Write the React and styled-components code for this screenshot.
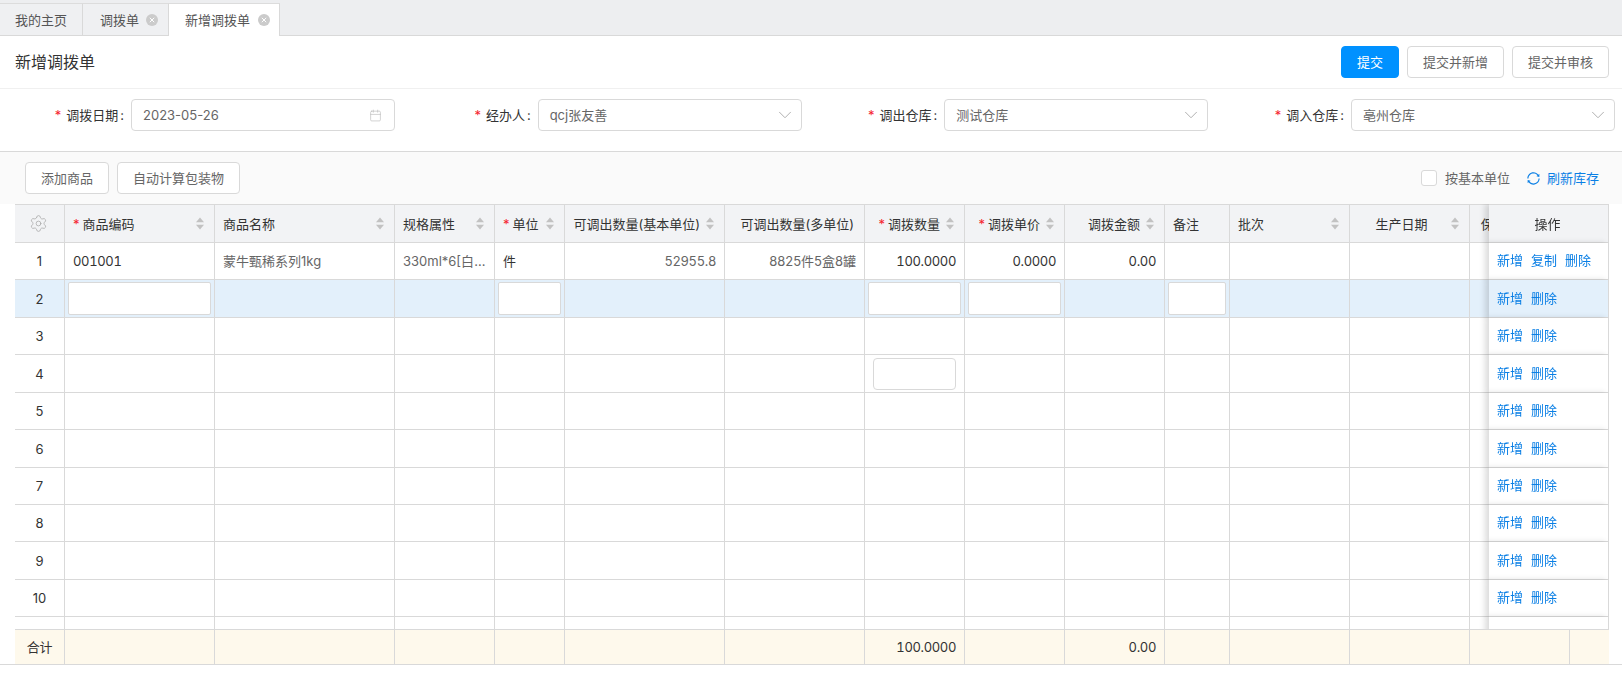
import React from 'react';
import styled, { createGlobalStyle } from 'styled-components';
import { Settings, Calendar, ChevronDown } from 'lucide-react';
import { AiOutlineSync } from 'react-icons/ai';

const GlobalStyle = createGlobalStyle`
  html, body {
    margin: 0;
    padding: 0;
    background: #fff;
    color: #333;
    font-family: Inter, "Noto Sans CJK SC", sans-serif;
    font-size: 13px;
    line-height: 18px;
  }
  * { box-sizing: border-box; }
`;

const Page = styled.div`
  width: 1622px;
  height: 679px;
  overflow: hidden;
  background: #fff;
`;

const TabBar = styled.div`
  display: flex;
  align-items: flex-end;
  height: 36px;
  padding-top: 3px;
  background: #edeef0;
  border-bottom: 1px solid #d9d9d9;
`;

const Tab = styled.div`
  display: flex;
  align-items: center;
  gap: ${(p) => (p.$active ? '8px' : '7px')};
  height: ${(p) => (p.$active ? '33px' : '32px')};
  margin-bottom: ${(p) => (p.$active ? '-1px' : '0')};
  padding: ${(p) => {
    if (p.$first) return '0 15px';
    return p.$active ? '0 9px 0 16px' : '0 10px 0 17px';
  }};
  color: #555;
  background: ${(p) => (p.$active ? '#fff' : '#eff0f2')};
  border-top: 1px solid #dcdcdc;
  border-right: 1px solid #d9d9d9;
`;

const CloseDot = styled.svg`
  width: 12px;
  height: 12px;
  flex: none;
`;

const CloseIcon = () => (
  <CloseDot viewBox="0 0 12 12">
    <circle cx="6" cy="6" r="6" fill="#cbcbcb" />
    <path d="M3.8 3.8l4.4 4.4M8.2 3.8l-4.4 4.4" stroke="#fff" strokeWidth="1" fill="none" />
  </CloseDot>
);

const TitleBar = styled.div`
  display: flex;
  align-items: center;
  justify-content: space-between;
  height: 53px;
  padding: 0 13px 0 15px;
  border-bottom: 1px solid #f0f0f0;
`;

const Title = styled.h1`
  margin: 0;
  font-size: 16px;
  line-height: 22px;
  font-weight: 400;
  color: #333;
`;

const Actions = styled.div`
  display: flex;
  gap: 8px;
`;

const Button = styled.button`
  height: 32px;
  padding: 0 15px;
  font: inherit;
  color: ${(p) => (p.$primary ? '#fff' : '#666')};
  background: ${(p) => (p.$primary ? '#0091ff' : '#fff')};
  border: 1px solid ${(p) => (p.$primary ? '#0091ff' : '#d9d9d9')};
  border-radius: 4px;
`;

const Form = styled.div`
  display: grid;
  grid-template-columns: 395px repeat(3, 1fr);
  height: 62px;
  padding: 10px 7px 0 0;
`;

const Field = styled.div`
  display: flex;
  align-items: center;
  justify-content: flex-end;
  height: 32px;
`;

const Label = styled.label`
  margin-right: 7px;
  color: #333;
`;

const Colon = styled.span`
  margin-left: 2px;
`;

const Star = styled.span`
  margin-right: 3px;
  color: #f5222d;
`;

const LabelStar = styled(Star)`
  margin-right: 5px;
`;

const SelectBox = styled.div`
  display: flex;
  align-items: center;
  justify-content: space-between;
  width: 264px;
  height: 32px;
  padding: 0 ${(p) => (p.$date ? '12px' : '5px')} 0 11px;
  color: #666;
  background: #fff;
  border: 1px solid #d9d9d9;
  border-radius: 4px;
`;

const Toolbar = styled.div`
  display: flex;
  align-items: center;
  justify-content: space-between;
  height: 53px;
  padding: 0 23px 0 25px;
  background: #fafafa;
  border-top: 1px solid #d9d9d9;
`;

const ToolGroup = styled.div`
  display: flex;
  align-items: center;
  gap: 8px;
`;

const CheckBox = styled.span`
  width: 16px;
  height: 16px;
  background: #fff;
  border: 1px solid #d9d9d9;
  border-radius: 3px;
`;

const CheckLabel = styled.span`
  margin-right: 8px;
  color: #666;
`;

const RefreshLink = styled.a`
  display: flex;
  align-items: center;
  gap: 6px;
  color: #0a7fe5;
`;

const TableWrap = styled.div`
  width: 1594px;
  height: 425px;
  margin-left: 15px;
  overflow: hidden;
`;

const Table = styled.table`
  width: ${(p) => p.$width}px;
  table-layout: fixed;
  border-collapse: separate;
  border-spacing: 0;
`;

const Th = styled.th`
  height: 39px;
  padding: 0 10px 0 8px;
  font-weight: 400;
  color: #333;
  background: #f2f3f5;
  border-top: 1px solid #d9d9d9;
  border-right: 1px solid #d9d9d9;
  border-bottom: 1px solid #d9d9d9;
  white-space: nowrap;
  overflow: hidden;
`;

const HeadInner = styled.div`
  display: flex;
  align-items: center;
  justify-content: ${(p) => {
    if (p.$align === 'right') return 'flex-end';
    return p.$align === 'center' ? 'center' : 'space-between';
  }};
  gap: 6px;
`;

const HeadText = styled.span`
  flex: ${(p) => (p.$align === 'center' ? 1 : 'none')};
  text-align: ${(p) => (p.$align === 'center' ? 'center' : 'left')};
`;

const cellPadding = (p) => {
  if (p.$tight) return '0 3px';
  return p.$snug ? '0 4px 0 8px' : '0 8px';
};

const Td = styled.td`
  height: ${(p) => p.$height}px;
  padding: ${cellPadding};
  color: ${(p) => (p.$muted ? '#666' : '#333')};
  text-align: ${(p) => p.$align || 'left'};
  font-variant-numeric: ${(p) => (p.$tabular ? 'tabular-nums' : 'normal')};
  letter-spacing: ${(p) => (p.$tabular ? '-0.35px' : 'normal')};
  background: ${(p) => (p.$active ? '#e3f0fb' : '#fff')};
  border-right: 1px solid #d9d9d9;
  border-bottom: 1px solid #d9d9d9;
  white-space: nowrap;
  overflow: hidden;
  text-overflow: ellipsis;
`;

const OpHead = styled(Th)`
  position: sticky;
  right: 0;
  z-index: 2;
  text-align: center;
  box-shadow: -4px 0 6px rgba(0, 0, 0, 0.14);
`;

const OpCell = styled(Td)`
  position: sticky;
  right: 0;
  z-index: 2;
  padding: 0 8px;
  overflow: visible;
  box-shadow: -4px 0 6px rgba(0, 0, 0, 0.14);
`;

const OpLinks = styled.div`
  display: flex;
  gap: 8px;
  padding-bottom: 2px;
`;

const OpLink = styled.a`
  color: #0a7fe5;
`;

const CellInput = styled.input`
  display: block;
  width: 100%;
  height: ${(p) => (p.$soft ? '32px' : '33px')};
  padding: 0 6px;
  font: inherit;
  background: #fff;
  border: 1px solid #d9d9d9;
  border-radius: ${(p) => (p.$soft ? '4px' : '2px')};
  outline: none;
`;

const FooterWrap = styled.div`
  height: 36px;
  padding-left: 15px;
  border-bottom: 1px solid #d9d9d9;
`;

const FootCell = styled.td`
  height: 35px;
  padding: 0 8px;
  color: #333;
  text-align: ${(p) => p.$align || 'left'};
  font-variant-numeric: tabular-nums;
  letter-spacing: -0.35px;
  background: #fef9ec;
  border-top: 1px solid #d9d9d9;
  border-right: ${(p) => (p.$last ? 'none' : '1px solid #d9d9d9')};
`;

const SortSvg = styled.svg`
  flex: none;
  width: 8px;
  height: 13px;
`;

const SortIcon = () => (
  <SortSvg viewBox="0 0 8 13">
    <path d="M4 0.5L8 5.2H0z" fill="#c2c2c2" />
    <path d="M4 12.5L8 7.8H0z" fill="#c2c2c2" />
  </SortSvg>
);

const columns = [
  { key: 'no', title: '', width: 50, align: 'center' },
  { key: 'code', title: '商品编码', width: 150, required: true, sort: true, tabular: true },
  { key: 'name', title: '商品名称', width: 180, sort: true, muted: true },
  { key: 'spec', title: '规格属性', width: 100, sort: true, muted: true, snug: true },
  { key: 'unit', title: '单位', width: 70, required: true, sort: true },
  { key: 'avail', title: '可调出数量(基本单位)', width: 160, sort: true, align: 'right', muted: true, tabular: true },
  { key: 'multi', title: '可调出数量(多单位)', width: 140, align: 'right', muted: true },
  { key: 'qty', title: '调拨数量', width: 100, required: true, sort: true, align: 'right', tabular: true },
  { key: 'price', title: '调拨单价', width: 100, required: true, sort: true, align: 'right', tabular: true },
  { key: 'amount', title: '调拨金额', width: 100, sort: true, align: 'right', tabular: true },
  { key: 'remark', title: '备注', width: 65 },
  { key: 'batch', title: '批次', width: 120, sort: true },
  { key: 'made', title: '生产日期', width: 120, sort: true, headAlign: 'center' },
  { key: 'shelf', title: '保质期(天)', width: 100, sort: true, headAlign: 'center' },
];

const firstRow = {
  code: '001001',
  name: '蒙牛甄稀系列1kg',
  spec: '330ml*6[白桃味]',
  unit: '件',
  avail: '52955.8',
  multi: '8825件5盒8罐',
  qty: '100.0000',
  price: '0.0000',
  amount: '0.00',
};

// line positions in the table are not even, so each row keeps its own height
const rowHeights = [37, 38, 37, 38, 37, 38, 37, 37, 38, 37, 37];
const editing = ['code', 'unit', 'qty', 'price', 'remark'];

const footerWidths = [...columns.map((c) => c.width), 39];

const renderCell = (col, index) => {
  if (col.key === 'no') return index < 10 ? index + 1 : '';
  if (index === 0) return firstRow[col.key] || '';
  if (index === 1 && editing.includes(col.key)) return <CellInput />;
  if (index === 3 && col.key === 'qty') return <CellInput $soft />;
  return '';
};

const App = () => (
  <Page>
    <GlobalStyle />
    <TabBar>
      <Tab $first>我的主页</Tab>
      <Tab>
        调拨单
        <CloseIcon />
      </Tab>
      <Tab $active>
        新增调拨单
        <CloseIcon />
      </Tab>
    </TabBar>

    <TitleBar>
      <Title>新增调拨单</Title>
      <Actions>
        <Button $primary>提交</Button>
        <Button>提交并新增</Button>
        <Button>提交并审核</Button>
      </Actions>
    </TitleBar>

    <Form>
      <Field>
        <Label><LabelStar>*</LabelStar>调拨日期<Colon>:</Colon></Label>
        <SelectBox $date>
          2023-05-26
          <Calendar size={13} strokeWidth={1.2} color="#bbb" />
        </SelectBox>
      </Field>
      <Field>
        <Label><LabelStar>*</LabelStar>经办人<Colon>:</Colon></Label>
        <SelectBox>
          qcj张友善
          <ChevronDown size={22} strokeWidth={1} color="#aaa" />
        </SelectBox>
      </Field>
      <Field>
        <Label><LabelStar>*</LabelStar>调出仓库<Colon>:</Colon></Label>
        <SelectBox>
          测试仓库
          <ChevronDown size={22} strokeWidth={1} color="#aaa" />
        </SelectBox>
      </Field>
      <Field>
        <Label><LabelStar>*</LabelStar>调入仓库<Colon>:</Colon></Label>
        <SelectBox>
          亳州仓库
          <ChevronDown size={22} strokeWidth={1} color="#aaa" />
        </SelectBox>
      </Field>
    </Form>

    <Toolbar>
      <ToolGroup>
        <Button>添加商品</Button>
        <Button>自动计算包装物</Button>
      </ToolGroup>
      <ToolGroup>
        <CheckBox />
        <CheckLabel>按基本单位</CheckLabel>
        <RefreshLink>
          <AiOutlineSync size={15} />
          刷新库存
        </RefreshLink>
      </ToolGroup>
    </Toolbar>

    <TableWrap>
      <Table $width={1675}>
        <colgroup>
          {columns.map((col) => <col key={col.key} width={col.width} />)}
          <col width={120} />
        </colgroup>
        <thead>
          <tr>
            {columns.map((col) => (
              <Th key={col.key}>
                {col.key === 'no' ? (
                  <HeadInner $align="center">
                    <Settings size={19} strokeWidth={1} color="#aaa" />
                  </HeadInner>
                ) : (
                  <HeadInner $align={col.align}>
                    <HeadText $align={col.headAlign}>
                      {col.required && <Star>*</Star>}
                      {col.title}
                    </HeadText>
                    {col.sort && <SortIcon />}
                  </HeadInner>
                )}
              </Th>
            ))}
            <OpHead>操作</OpHead>
          </tr>
        </thead>
        <tbody>
          {rowHeights.map((height, index) => (
            <tr key={index}>
              {columns.map((col) => (
                <Td
                  key={col.key}
                  $height={height}
                  $active={index === 1}
                  $align={col.align}
                  $muted={col.muted}
                  $snug={col.snug}
                  $tabular={col.tabular}
                  $tight={index === 1 && editing.includes(col.key)}
                >
                  {renderCell(col, index)}
                </Td>
              ))}
              <OpCell $height={height} $active={index === 1}>
                {index < 10 && (
                  <OpLinks>
                    <OpLink>新增</OpLink>
                    {index === 0 && <OpLink>复制</OpLink>}
                    <OpLink>删除</OpLink>
                  </OpLinks>
                )}
              </OpCell>
            </tr>
          ))}
        </tbody>
      </Table>
    </TableWrap>

    <FooterWrap>
      <Table $width={1594}>
        <colgroup>
          {footerWidths.map((w, i) => <col key={i} width={w} />)}
        </colgroup>
        <tbody>
          <tr>
            {footerWidths.map((w, i) => (
              <FootCell
                key={i}
                $last={i === footerWidths.length - 1}
                $align={i === 0 ? 'center' : 'right'}
              >
                {i === 0 && '合计'}
                {i === 7 && '100.0000'}
                {i === 9 && '0.00'}
              </FootCell>
            ))}
          </tr>
        </tbody>
      </Table>
    </FooterWrap>
  </Page>
);

export default App;
